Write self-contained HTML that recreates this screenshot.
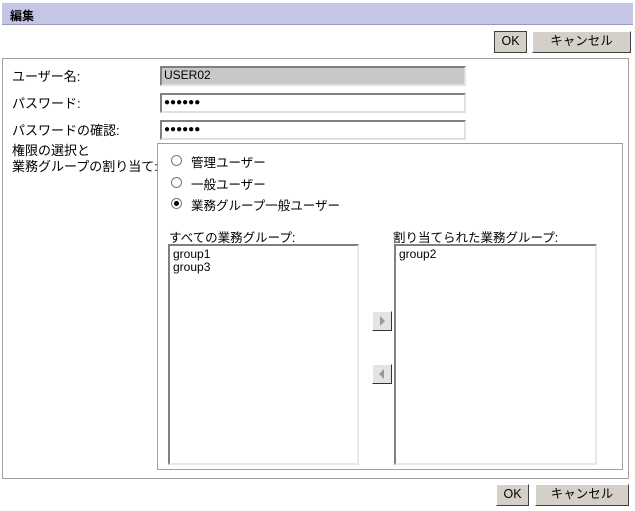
<!DOCTYPE html>
<html><head><meta charset="utf-8"><style>
*{box-sizing:border-box;margin:0;padding:0}
body{width:635px;height:511px;background:#fff;position:relative;font-family:"Liberation Sans","Noto Sans CJK JP",sans-serif;font-size:12.5px;color:#000;overflow:hidden}
.a{position:absolute}
.title{left:2px;top:3px;width:631px;height:22px;background:#c5c5e6;border-bottom:1px solid #9a9ab8;font-weight:bold;padding:4px 8px;font-size:12px}
.btn{position:absolute;background:#d4d0c8;border:1px solid;border-color:#fff #404040 #404040 #fff;text-align:center;line-height:19px;font-size:12.5px}
.inp{position:absolute;border:2px solid;border-color:#808080 #e0e0e0 #e0e0e0 #808080;background:#fff;padding:0 2px;line-height:15px;font-size:12px}
.lbl{position:absolute;left:12px;font-size:13px}
.list{position:absolute;border:2px solid;border-color:#808080 #e8e8e8 #e8e8e8 #808080;background:#fff;padding:2px 3px;line-height:13px;font-size:12px}
.rad{position:absolute;left:171px;width:11px;height:11px;border:1px solid #777;border-radius:50%;background:#fff}
.arr{position:absolute;left:372px;width:20px;height:20px;background:#e4e4e4;border:1px solid;border-color:#fff #333 #333 #fff}
</style></head><body>
<div class="a title">編集</div>
<div class="btn" style="left:494px;top:31px;width:33px;height:22px;border-color:#404040">OK</div>
<div class="btn" style="left:532px;top:31px;width:99px;height:22px">キャンセル</div>
<div class="a" style="left:2px;top:58px;width:627px;height:421px;border:1px solid #a0a0a0"></div>
<div class="lbl" style="top:66px">ユーザー名:</div>
<div class="lbl" style="top:93px">パスワード:</div>
<div class="lbl" style="top:120px">パスワードの確認:</div>
<div class="lbl" style="top:143px;line-height:16px">権限の選択と<br>業務グループの割り当て:</div>
<div class="inp" style="left:160px;top:66px;width:306px;height:20px;background:#c8c8c8">USER02</div>
<div class="inp" style="left:160px;top:93px;width:306px;height:20px;font-size:10px">●●●●●●</div>
<div class="inp" style="left:160px;top:120px;width:306px;height:20px;font-size:10px">●●●●●●</div>
<div class="a" style="left:157px;top:143px;width:466px;height:327px;border:1px solid #a0a0a0"></div>
<div class="rad" style="top:155px"></div><div class="a" style="left:191px;top:152px">管理ユーザー</div>
<div class="rad" style="top:177px"></div><div class="a" style="left:191px;top:174px">一般ユーザー</div>
<div class="rad" style="top:198px"><div style="width:5px;height:5px;background:#000;border-radius:50%;margin:2px"></div></div><div class="a" style="left:191px;top:195px">業務グループ一般ユーザー</div>
<div class="a" style="left:169px;top:227px">すべての業務グループ:</div>
<div class="a" style="left:393px;top:227px">割り当てられた業務グループ:</div>
<div class="list" style="left:168px;top:244px;width:191px;height:221px">group1<br>group3</div>
<div class="list" style="left:394px;top:244px;width:203px;height:221px">group2</div>
<div class="arr" style="top:311px"><div style="margin:4px 0 0 7px;width:0;height:0;border-left:5px solid #999;border-top:5px solid transparent;border-bottom:5px solid transparent"></div></div>
<div class="arr" style="top:364px"><div style="margin:4px 0 0 6px;width:0;height:0;border-right:5px solid #999;border-top:5px solid transparent;border-bottom:5px solid transparent"></div></div>
<div class="btn" style="left:496px;top:484px;width:33px;height:22px">OK</div>
<div class="btn" style="left:535px;top:484px;width:94px;height:22px">キャンセル</div>
</body></html>
